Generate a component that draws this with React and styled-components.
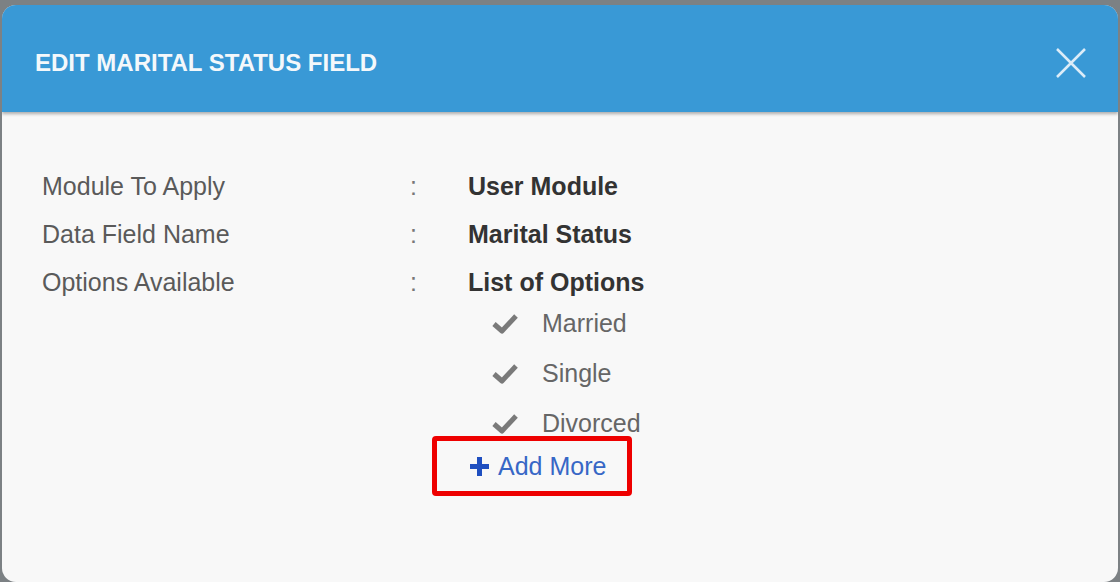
import React from 'react';
import styled, { createGlobalStyle } from 'styled-components';

const GlobalStyle = createGlobalStyle`
  html, body {
    margin: 0;
    padding: 0;
    background: #7c8184;
    font-family: "Liberation Sans", Arial, sans-serif;
  }
`;

const Page = styled.div`
  height: 582px;
  padding: 5px 2px 0 2px;
  box-sizing: border-box;
  overflow: hidden;
`;

const Modal = styled.div`
  height: 577px;
  background: #f8f8f8;
  border-radius: 14px;
  overflow: hidden;
  display: flex;
  flex-direction: column;
`;

const Header = styled.div`
  height: 107px;
  box-sizing: border-box;
  background: #3999d6;
  display: flex;
  align-items: center;
  justify-content: space-between;
  padding: 9px 30px 0 33px;
  box-shadow: 0 2px 3px rgba(0, 0, 0, 0.3);
  position: relative;
  z-index: 1;
`;

const Title = styled.h2`
  margin: 0;
  color: #f4f8fb;
  font-size: 24px;
  font-weight: 700;
`;

const CloseButton = styled.button`
  border: 0;
  background: none;
  padding: 0;
  width: 34px;
  height: 34px;
  display: flex;
  align-items: center;
  justify-content: center;
  cursor: pointer;
`;

const Body = styled.div`
  padding: 50px 0 0 40px;
`;

const Details = styled.div`
  display: grid;
  grid-template-columns: 368px 58px 1fr;
  font-size: 25px;
  line-height: 48px;
`;

const Label = styled.div`
  color: #5a5a5a;
`;

const Colon = styled.div`
  color: #777;
`;

const Value = styled.div`
  color: #333;
  font-weight: 700;
`;

const OptionList = styled.ul`
  list-style: none;
  margin: -8px 0 0 0;
  padding: 0 0 0 24px;
`;

const OptionItem = styled.li`
  display: flex;
  align-items: center;
  gap: 24px;
  height: 50px;
  color: #666;
  font-size: 25px;
`;

const AddMore = styled.button`
  margin: -12px 0 0 -36px;
  width: 200px;
  height: 60px;
  box-sizing: border-box;
  border: 5px solid #ee0000;
  border-radius: 4px;
  background: transparent;
  display: flex;
  align-items: center;
  gap: 8px;
  padding: 0 0 0 32px;
  font-family: inherit;
  font-size: 25px;
  color: #3767c6;
  cursor: pointer;
`;

const Check = () => (
  <svg width="26" height="22" viewBox="0 0 26 22">
    <path d="M2 12 L10 19 L24 4" fill="none" stroke="#7a7a7a" strokeWidth="5" strokeLinejoin="round" />
  </svg>
);

const Plus = () => (
  <svg width="21" height="21" viewBox="0 0 21 21">
    <path d="M10.5 1 V20 M1 10.5 H20" stroke="#1f4fc0" strokeWidth="5" />
  </svg>
);

const options = ['Married', 'Single', 'Divorced'];

export default function App() {
  return (
    <>
      <GlobalStyle />
      <Page>
        <Modal>
          <Header>
            <Title>EDIT MARITAL STATUS FIELD</Title>
            <CloseButton aria-label="Close">
              <svg width="32" height="32" viewBox="0 0 32 32">
                <path d="M2 2 L30 30 M30 2 L2 30" stroke="#dcecf8" strokeWidth="2.5" />
              </svg>
            </CloseButton>
          </Header>
          <Body>
            <Details>
              <Label>Module To Apply</Label>
              <Colon>:</Colon>
              <Value>User Module</Value>
              <Label>Data Field Name</Label>
              <Colon>:</Colon>
              <Value>Marital Status</Value>
              <Label>Options Available</Label>
              <Colon>:</Colon>
              <div>
                <Value>List of Options</Value>
                <OptionList>
                  {options.map((o) => (
                    <OptionItem key={o}>
                      <Check />
                      {o}
                    </OptionItem>
                  ))}
                </OptionList>
                <AddMore>
                  <Plus />
                  Add More
                </AddMore>
              </div>
            </Details>
          </Body>
        </Modal>
      </Page>
    </>
  );
}
